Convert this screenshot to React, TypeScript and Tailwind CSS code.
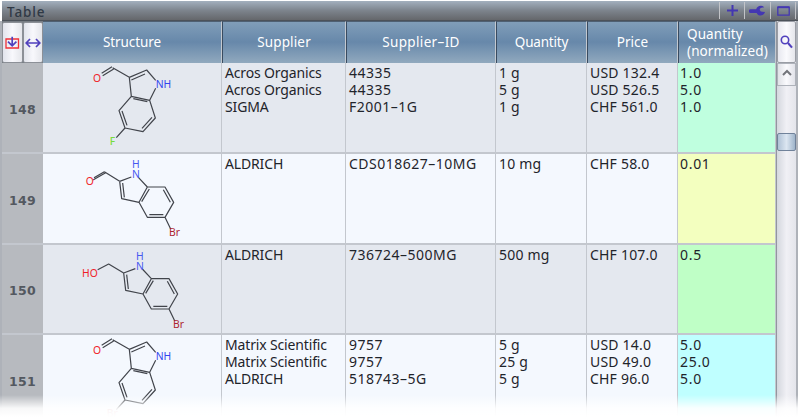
import React from "react";

type Molecule = "fluoro" | "aldehyde" | "alcohol" | "bromo";

type Row = {
  id: number;
  height: string;
  bg: string;
  tint: string;
  molecule: Molecule;
  supplier: string[];
  code: string[];
  quantity: string[];
  price: string[];
  normalized: string[];
};

const rows: Row[] = [
  {
    id: 148, height: "h-[91px]", bg: "bg-[#e4e8ef]", tint: "bg-[#bfffdf]", molecule: "fluoro",
    supplier: ["Acros Organics", "Acros Organics", "SIGMA"],
    code: ["44335", "44335", "F2001–1G"],
    quantity: ["1 g", "5 g", "1 g"],
    price: ["USD 132.4", "USD 526.5", "CHF 561.0"],
    normalized: ["1.0", "5.0", "1.0"],
  },
  {
    id: 149, height: "h-[91px]", bg: "bg-[#f4f8fe]", tint: "bg-[#f3ffbf]", molecule: "aldehyde",
    supplier: ["ALDRICH"], code: ["CDS018627–10MG"], quantity: ["10 mg"], price: ["CHF 58.0"], normalized: ["0.01"],
  },
  {
    id: 150, height: "h-[90px]", bg: "bg-[#e4e8ef]", tint: "bg-[#bfffc6]", molecule: "alcohol",
    supplier: ["ALDRICH"], code: ["736724–500MG"], quantity: ["500 mg"], price: ["CHF 107.0"], normalized: ["0.5"],
  },
  {
    id: 151, height: "h-[91px]", bg: "bg-[#f4f8fe]", tint: "bg-[#bfffff]", molecule: "bromo",
    supplier: ["Matrix Scientific", "Matrix Scientific", "ALDRICH"],
    code: ["9757", "9757", "518743–5G"],
    quantity: ["5 g", "25 g", "5 g"],
    price: ["USD 14.0", "USD 49.0", "CHF 96.0"],
    normalized: ["5.0", "25.0", "5.0"],
  },
];

const columns = "grid grid-cols-[41px_179px_124px_150px_91px_91px_98px]";

function Formyl3({ label, x, color }: { label: string; x: number; color: string }) {
  return (
    <>
      <path d="M185 40L216 20M188 47L221 27M218 23L268 52L320 30L347 61M274 60L315 42M268 52L274 109L329 121L347 85M280 116L322 125M274 109L237 152L255 204L309 215L346 174L329 121M246 153L261 196M306 205L336 172M255 204L229 233" />
      <g stroke="none" fontSize="31">
        <text x="159" y="65" fill="#f01c28">O</text>
        <text x="347" y="84" fill="#3446ee">NH</text>
        <text x={x} y="256" fill={color} className="font-medium">{label}</text>
      </g>
    </>
  );
}

function Indole2({ alcohol }: { alcohol: boolean }) {
  return (
    <g transform={alcohol ? "translate(12 2)" : undefined}>
      {alcohol ? <path d="M161 84L194 67L239 94" /> : <path d="M162 83L193 65M159 90L197 68M193 65L239 94" />}
      <path d="M239 94L274 81M295 82L322 111L375 111L401 157L375 202L322 202L297 157L322 111M239 94L245 146L297 157M248 99L253 142M305 155L328 117M370 119L391 157M328 194L370 194M375 202L392 237" />
      <g stroke="none" fontSize="31">
        <text x={alcohol ? 114 : 137} y="105" fill="#f01c28">{alcohol ? "HO" : "O"}</text>
        <text x="276" y="54" fill="#4658f0">H</text>
        <text x="276" y="85" fill="#4658f0">N</text>
        <text x="387" y="259" fill="#ad2430">Br</text>
      </g>
    </g>
  );
}

function Structure({ kind }: { kind: Molecule }) {
  const top = { fluoro: 9, aldehyde: 12, alcohol: 12, bromo: 9 }[kind];
  return (
    <svg width="178" height="90" viewBox={`9 ${top} 534 270`} fill="none" stroke="#41444b" strokeWidth="3.6" strokeLinejoin="round" className="block font-['Noto_Sans',sans-serif]">
      {kind === "fluoro" && <Formyl3 label="F" x={209} color="#78dc3c" />}
      {kind === "bromo" && <Formyl3 label="Br" x={200} color="#d0808a" />}
      {(kind === "aldehyde" || kind === "alcohol") && <Indole2 alcohol={kind === "alcohol"} />}
    </svg>
  );
}

function Lines({ items, className }: { items: string[]; className: string }) {
  return (
    <div className={`overflow-hidden border-r border-b-2 border-[#c3c7ce] pt-px text-[14px] leading-[17px] whitespace-nowrap text-[#1f242b] ${className}`}>
      {items.map((t, i) => <div key={i}>{t}</div>)}
    </div>
  );
}

function HeadCell({ children, left }: { children: React.ReactNode; left?: boolean }) {
  return (
    <div className={`flex items-center border-t border-l border-r border-t-[#4f6073] border-l-[#394b60] border-r-[#c3c8cf] text-[13.5px] leading-[17px] text-white ${left ? "justify-start pl-[8px]" : "justify-center"}`}>
      {children}
    </div>
  );
}

export default function App() {
  return (
    <div className="relative flex h-[417px] w-[800px] flex-col overflow-hidden bg-white font-['Noto_Sans',sans-serif]">
      <div className="mx-[2px] mt-px flex h-[20px] w-[796px] shrink-0 items-center justify-between border-b border-[#4c525a] bg-linear-to-b from-[#a3b0be] via-[#7d848d] to-[#65676b] pl-[5px]">
        <span className="pt-[2px] text-[13.5px] leading-[18px] font-medium tracking-[0.9px] text-[#303945]">Table</span>
        <div className="flex h-[17px] pr-[2px]">
          <div className="flex w-[25px] items-center justify-center border-l border-[#c2c4c8]">
            <svg width="13" height="13" viewBox="0 0 13 13" stroke="#4437b2" strokeWidth="2"><path d="M6.5 1v11M1 6.5h11" /></svg>
          </div>
          <div className="flex w-[26px] items-center justify-center border-l border-[#c2c4c8]">
            <svg width="17" height="12" viewBox="0 0 17 12" fill="#4437b2"><path d="M1.6 4.2h5.6C7.8 2.2 9.6.8 11.8.8c1.4 0 2.6.5 3.5 1.4l-3.7.9-1 1.7 1.2 1.8 4.2.5c-.5 2-2.2 3.4-4.3 3.4-1.9 0-3.4-1-4.1-2.6H1.6A1.8 1.8 0 0 1 1.6 4.2z" /></svg>
          </div>
          <div className="flex w-[26px] items-center justify-center border-x border-[#c2c4c8]">
            <svg width="13" height="10" viewBox="0 0 13 10" fill="none" stroke="#4437b2"><path d="M.8 1.3h11.4v7.9H.8z" strokeWidth="1.3" /><path d="M.5 1.2h12" strokeWidth="2" /></svg>
          </div>
        </div>
      </div>

      <div className="mr-[2px] flex min-h-0 flex-1 border-x-2 border-x-[#aeb2b9]">
        <div className="flex w-[774px] shrink-0 flex-col">
          <div className={`${columns} h-[42px] shrink-0 bg-linear-to-b from-[#829fba] via-[#6788aa] to-[#91a9be]`}>
            <div className="flex bg-[#777d84]">
              {[0, 1].map((i) => (
                <div key={i} className="mt-px flex w-[20.5px] items-center justify-center rounded-[2px] border border-[#8c9097] bg-linear-to-r from-[#e2e4ec] via-[#f8f8fc] to-[#e5e6eb]">
                  {i === 0 ? (
                    <svg width="15" height="14" viewBox="0 0 15 14" fill="none" className="shrink-0"><path d="M1 3h12.5v9H1z" stroke="#ef3038" strokeWidth="1.3" /><path d="M7.2.8v9M3 5.7l4.2 4.2 4.2-4.2" stroke="#5040bd" strokeWidth="1.7" /></svg>
                  ) : (
                    <svg width="16" height="12" viewBox="0 0 16 12" fill="none" stroke="#5040bd" strokeWidth="1.7" className="shrink-0"><path d="M1.5 6h13M5 2L1.2 6 5 10M11 2l3.8 4-3.8 4" /></svg>
                  )}
                </div>
              ))}
            </div>
            <div className="flex items-center justify-center border-t border-r border-t-[#4f6073] border-r-[#c3c8cf] text-[13.5px] tracking-[-0.1px] text-white">Structure</div>
            <HeadCell><span className="tracking-[0.15px]">Supplier</span></HeadCell>
            <HeadCell><span className="tracking-[0.35px]">Supplier–ID</span></HeadCell>
            <HeadCell><span className="tracking-[-0.2px]">Quantity</span></HeadCell>
            <HeadCell><span>Price</span></HeadCell>
            <HeadCell left><span className="tracking-[0.1px]">Quantity<br />(normalized)</span></HeadCell>
          </div>
          {rows.map((row) => (
            <div key={row.id} className={`${columns} ${row.height} ${row.bg} shrink-0`}>
              <div className="flex items-center justify-center border-b-2 border-b-[#c3c7ce] bg-[#b7babf] pt-[5px] font-['DejaVu_Sans',sans-serif] text-[12.5px] font-bold tracking-[0.3px] text-[#535860]">{row.id}</div>
              <div className="overflow-hidden border-r border-b-2 border-[#c3c7ce]"><Structure kind={row.molecule} /></div>
              <Lines items={row.supplier} className="pl-[3px] tracking-[-0.15px]" />
              <Lines items={row.code} className="pl-[3px] tracking-[0.5px]" />
              <Lines items={row.quantity} className="pl-[3px] tracking-[0.2px]" />
              <Lines items={row.price} className="pl-[3px] tracking-[0.2px]" />
              <Lines items={row.normalized} className={`pl-[2px] tracking-[0.7px] ${row.tint}`} />
            </div>
          ))}
        </div>
        <div className="flex flex-1 flex-col border-l border-[#92969e] bg-linear-to-r from-[#d4d7de] via-[#f0f0f5] to-[#e4e5eb]">
          <div className="flex h-[42px] shrink-0 items-center justify-center rounded-[2px] border border-[#9a9da5] bg-linear-to-r from-[#e7e8ef] via-[#fafafd] to-[#e5e6eb]">
            <svg width="13" height="14" viewBox="0 0 13 14" fill="none" stroke="#5040bd"><circle cx="5" cy="5" r="3.7" strokeWidth="1.6" /><path d="M8 8l4 4.6" strokeWidth="2.1" /></svg>
          </div>
          <div className="flex h-[23px] shrink-0 items-center justify-center border border-[#aeb2ba] bg-linear-to-r from-[#dfe1e6] via-[#fafafd] to-[#e1e2e9] pb-[4px]">
            <svg width="10" height="7" viewBox="0 0 10 7" fill="none" stroke="#73757b" strokeWidth="2"><path d="M1 6l4-4 4 4" /></svg>
          </div>
          <div className="mt-[47px] h-[18px] shrink-0 rounded-[2px] border border-[#70829a] bg-linear-to-r from-[#afc1d5] via-[#dce6f1] to-[#9fb4ca]" />
        </div>
      </div>
      <div className="absolute inset-x-0 bottom-0 h-[22px] bg-linear-to-b from-white/0 via-white/90 via-60% to-white" />
    </div>
  );
}
